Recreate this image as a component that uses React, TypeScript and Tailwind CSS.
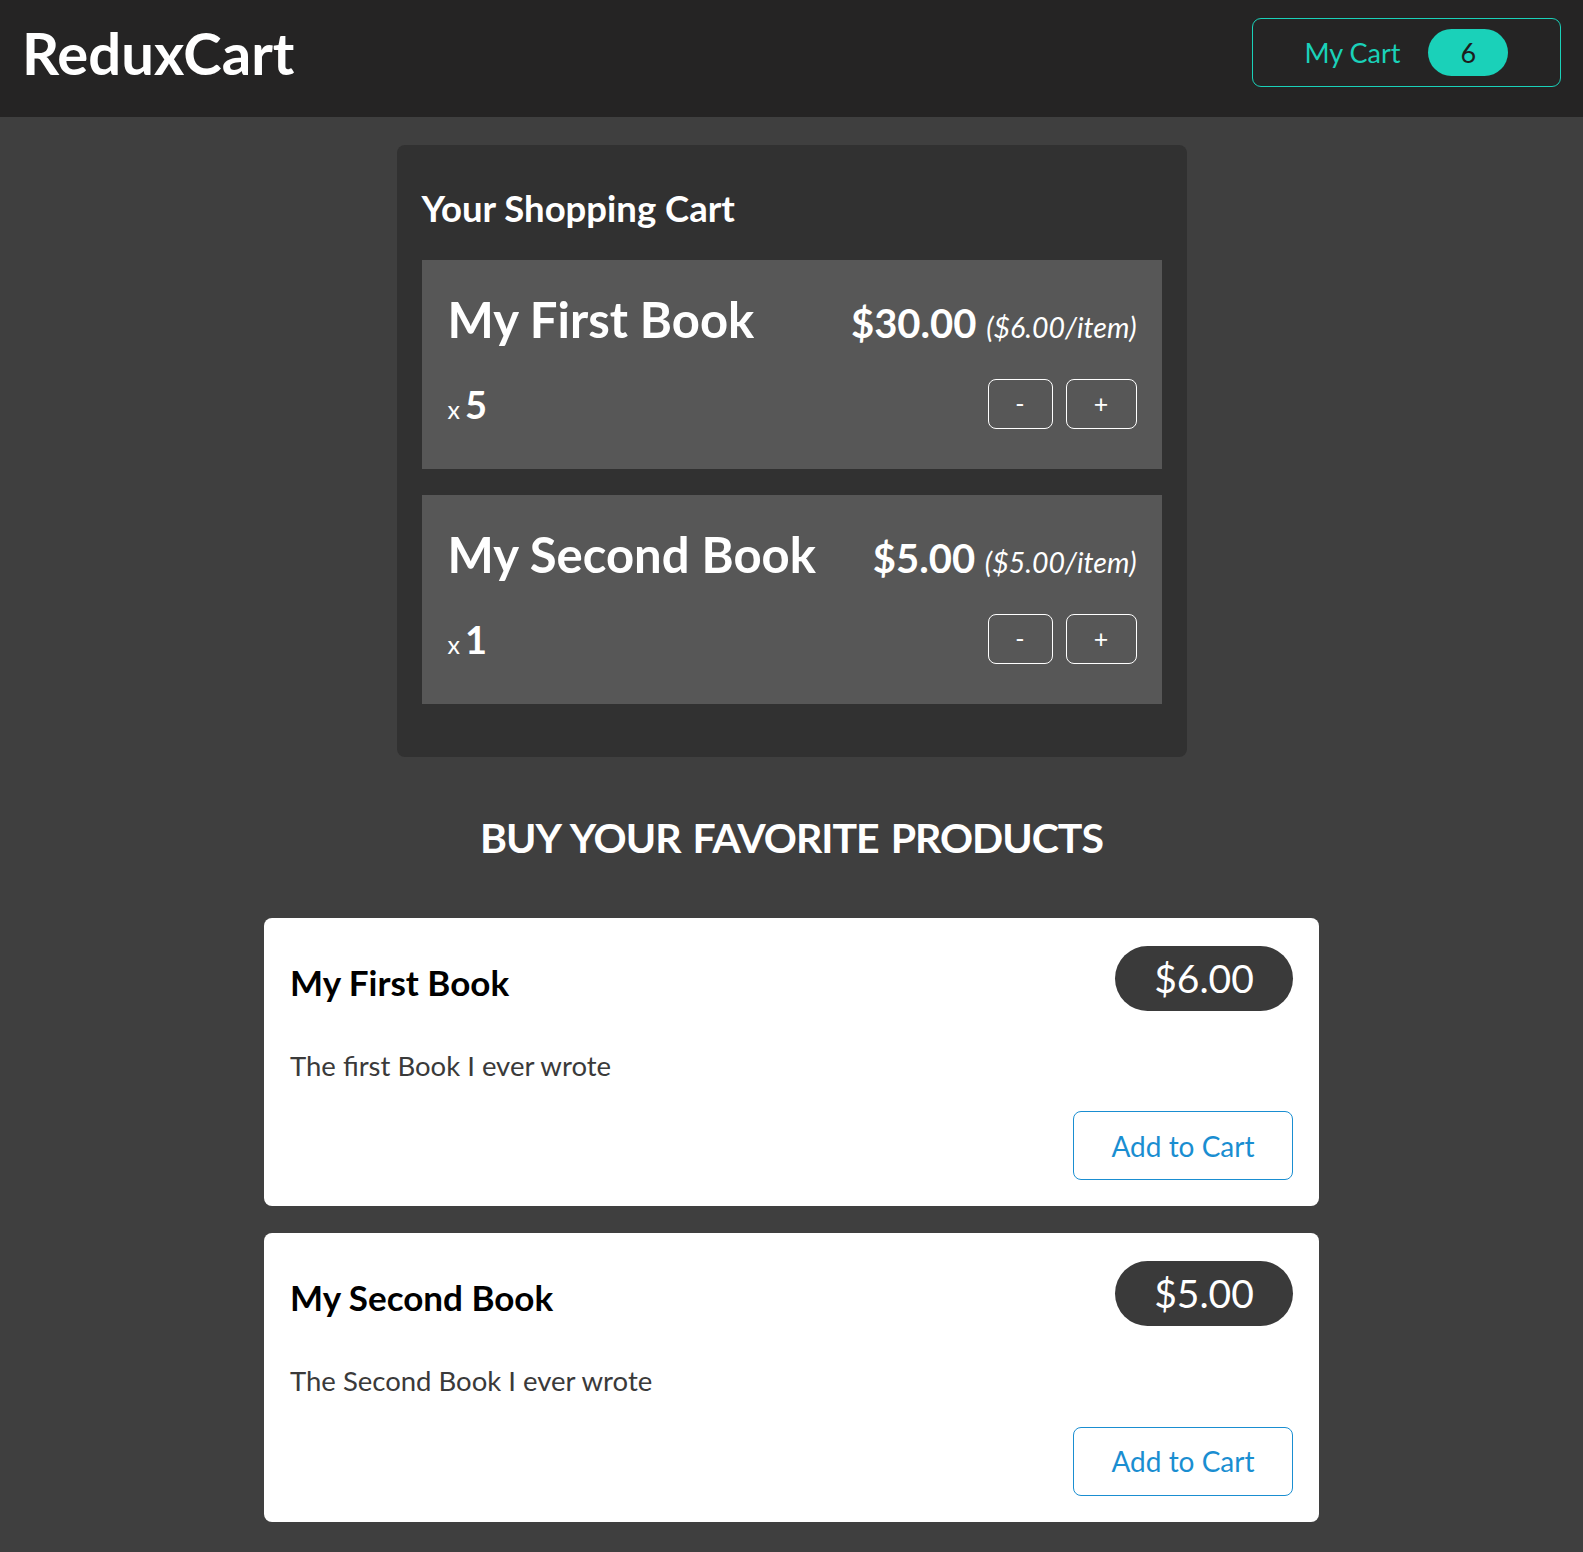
import React from 'react';

const cartItems = [
    { title: 'My First Book', quantity: 5, total: 30, price: 6 },
    { title: 'My Second Book', quantity: 1, total: 5, price: 5 },
];

const products = [
    { title: 'My First Book', price: 6, description: 'The first Book I ever wrote' },
    { title: 'My Second Book', price: 5, description: 'The Second Book I ever wrote' },
];

function CartItem({ item }: { item: (typeof cartItems)[number] }) {
    return (
        <li className="bg-[#575757] pl-[26px] pr-[25px] pt-[35px] pb-[40px]">
            <div className="flex items-baseline justify-between">
                <h3 className="text-[49px] font-bold leading-none">{item.title}</h3>
                <div className="text-[40px] font-bold leading-none">
                    ${item.total.toFixed(2)}{' '}
                    <span className="text-[28.5px] font-normal italic">(${item.price.toFixed(2)}/item)</span>
                </div>
            </div>
            <div className="mt-[35px] flex items-center justify-between">
                <div className="flex items-baseline pt-[6px]">
                    <span className="text-[25px] mr-[5px]">x</span>
                    <span className="text-[38px] font-bold leading-none">{item.quantity}</span>
                </div>
                <div className="flex gap-[13px]">
                    <button className="w-[65px] h-[50px] border border-white rounded-[8px] text-[25px] leading-none">-</button>
                    <button className="w-[71px] h-[50px] border border-white rounded-[8px] text-[25px] leading-none">+</button>
                </div>
            </div>
        </li>
    );
}

function ProductItem({ product }: { product: (typeof products)[number] }) {
    return (
        <li className="bg-white rounded-[8px] pl-[26px] pr-[26px] pt-[28px] pb-[26px]">
            <header className="flex items-start justify-between">
                <h3 className="mt-[19px] text-[35px] font-bold leading-none text-black">{product.title}</h3>
                <div className="w-[178px] h-[65px] rounded-full bg-[#3a3a3a] text-white text-[39px] leading-none flex items-center justify-center">
                    ${product.price.toFixed(2)}
                </div>
            </header>
            <p className="mt-[41px] text-[27.5px] leading-none text-[#3a3a3a]">{product.description}</p>
            <div className="mt-[32px] flex justify-end">
                <button className="w-[220px] h-[69px] border border-[#1a8ed1] rounded-[8px] text-[#1a8ed1] text-[28px] leading-none">
                    Add to Cart
                </button>
            </div>
        </li>
    );
}

export default function App() {
    return (
        <div className="min-h-screen bg-[#3f3f3f] font-['Lato',sans-serif] text-white pb-[31px]">
            {/* Header */}
            <header className="h-[117px] bg-[#252424] flex items-center justify-between pl-[22px] pr-[22px] pb-[12px]">
                <h1 className="text-[58px] font-bold leading-none">ReduxCart</h1>
                <button className="w-[309px] h-[69px] border border-[#1ad1b9] rounded-[9px] flex items-center justify-center gap-[28px] text-[#1ad1b9] text-[27px] leading-none">
                    <span>My Cart</span>
                    <span className="w-[80px] h-[47px] rounded-full bg-[#1ad1b9] text-[#1d1d1d] flex items-center justify-center">6</span>
                </button>
            </header>

            <main className="flex flex-col items-center">
                {/* Cart */}
                <section className="mt-[28px] w-[790px] bg-[#313131] rounded-[8px] px-[25px] pt-[45px] pb-[28px]">
                    <h2 className="text-[36.5px] font-bold leading-none">Your Shopping Cart</h2>
                    <ul className="mt-[33px] flex flex-col gap-[26px]">
                        {cartItems.map((item) => (
                            <CartItem key={item.title} item={item} />
                        ))}
                    </ul>
                    <div className="h-[25px]" />
                </section>

                {/* Products */}
                <section className="w-[1055px] mt-[60px]">
                    <h2 className="text-center text-[41px] font-bold leading-none tracking-[-1px] [word-spacing:3px]">BUY YOUR FAVORITE PRODUCTS</h2>
                    <ul className="mt-[60px] flex flex-col gap-[27px]">
                        {products.map((p) => (
                            <ProductItem key={p.title} product={p} />
                        ))}
                    </ul>
                </section>
            </main>
        </div>
    );
}
